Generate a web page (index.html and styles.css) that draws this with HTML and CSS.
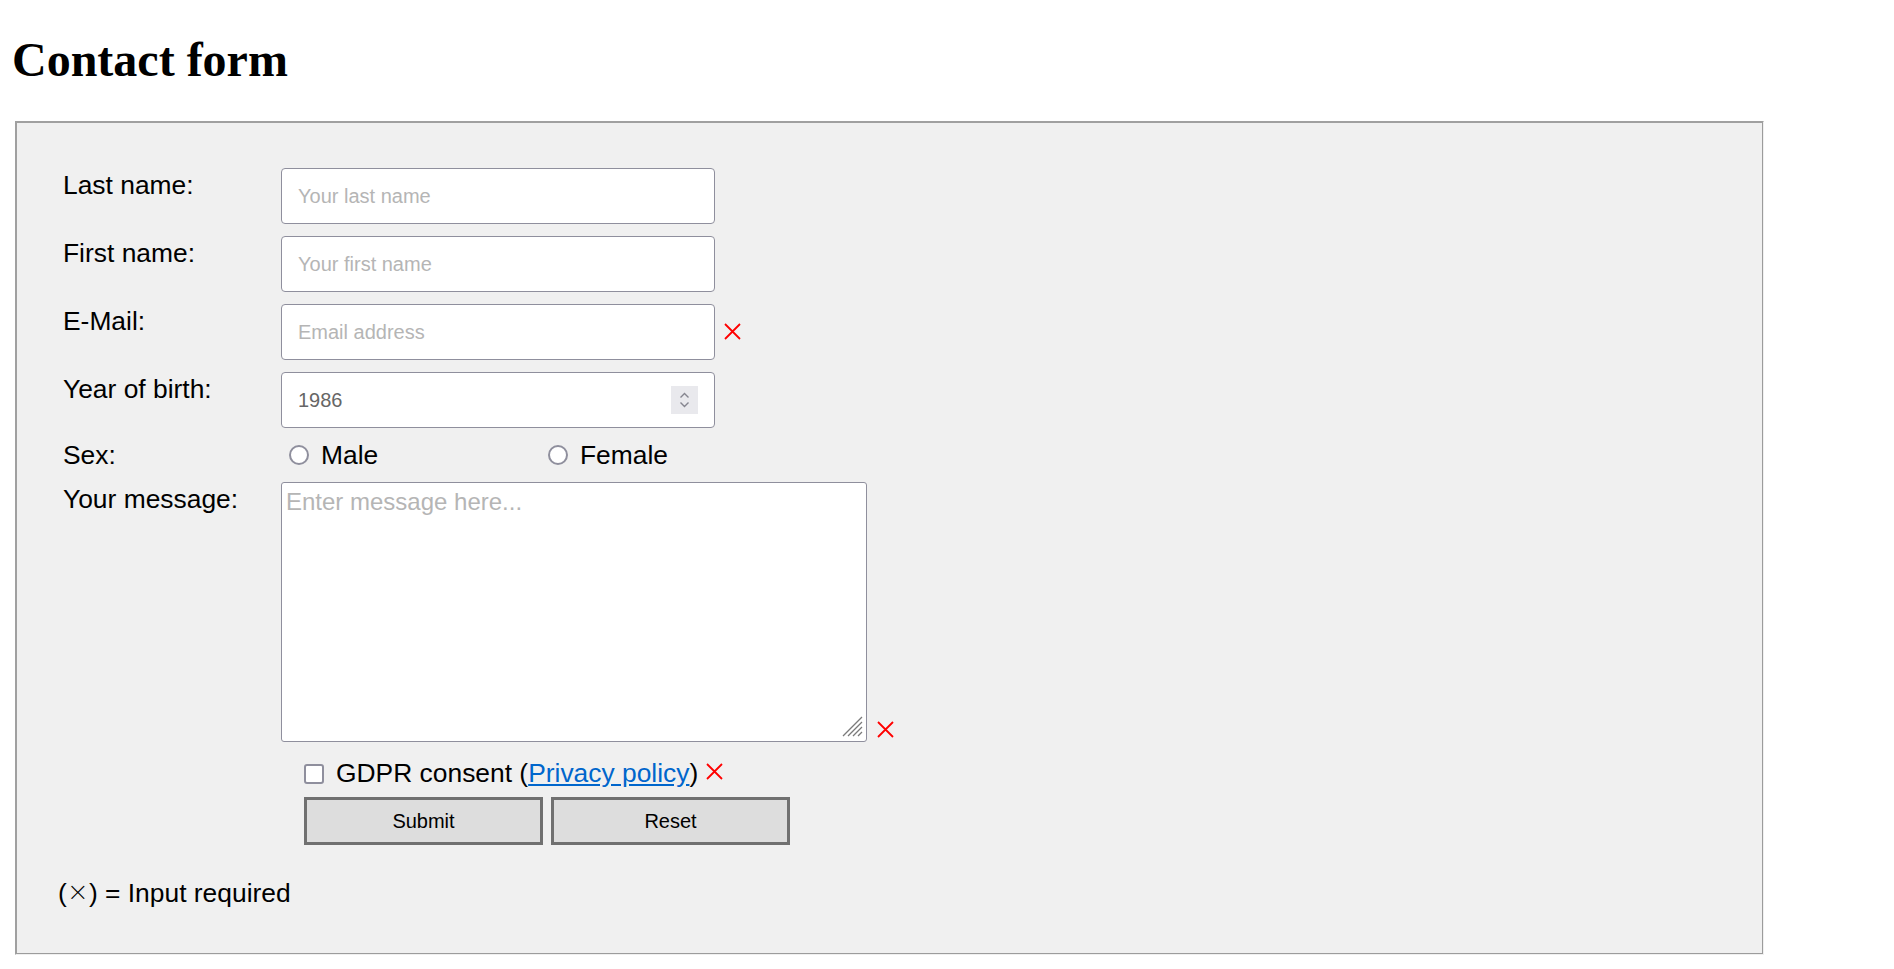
FILE: index.html
```html
<!DOCTYPE html>
<html lang="en">

<head>
  <meta charset="UTF-8">
  <meta name="viewport" content="width=device-width, initial-scale=1.0">
  <title>Contact form</title>
  <link rel="stylesheet" href="styles.css">
</head>

<body>
  <h1>Contact form</h1>

  <form class="contact-form">
    <div class="rows">
      <label class="caption" for="lastname">Last name:</label>
      <div class="field">
        <input type="text" id="lastname" placeholder="Your last name">
      </div>

      <label class="caption" for="firstname">First name:</label>
      <div class="field">
        <input type="text" id="firstname" placeholder="Your first name">
      </div>

      <label class="caption" for="email">E-Mail:</label>
      <div class="field middle">
        <input type="email" id="email" placeholder="Email address">
        <svg class="required" width="17" height="17" viewBox="0 0 17 17">
          <path d="M1 1 L16 16 M16 1 L1 16" />
        </svg>
      </div>

      <label class="caption" for="year">Year of birth:</label>
      <div class="field">
        <span class="number-box">
          <input type="number" id="year" value="1986">
          <span class="spin">
            <svg width="27" height="28" viewBox="0 0 27 28">
              <path d="M9.5 11.5 L13.5 7.5 L17.5 11.5" fill="none" stroke="#85858f" stroke-width="1.4" />
              <path d="M9.5 16.5 L13.5 20.5 L17.5 16.5" fill="none" stroke="#85858f" stroke-width="1.4" />
            </svg>
          </span>
        </span>
      </div>

      <span class="caption sex">Sex:</span>
      <div class="field options">
        <label class="option male"><input type="radio" name="sex" value="m">Male</label>
        <label class="option"><input type="radio" name="sex" value="f">Female</label>
      </div>

      <label class="caption" for="message">Your message:</label>
      <div class="field bottom">
        <span class="message-box">
          <textarea id="message" placeholder="Enter message here..."></textarea>
          <svg class="grip" width="21" height="21" viewBox="0 0 21 21">
            <path d="M1 20 L20 1 M6 20 L20 6 M11 20 L20 11 M16 20 L20 16" stroke="#7a7a7a" stroke-width="1.3" />
          </svg>
        </span>
        <svg class="required" width="17" height="17" viewBox="0 0 17 17">
          <path d="M1 1 L16 16 M16 1 L1 16" />
        </svg>
      </div>

      <div class="consent">
        <label class="gdpr">
          <input type="checkbox">
          <span>GDPR consent (<a href="#">Privacy policy</a>) <svg class="required" width="17" height="17" viewBox="0 0 17 17"><path d="M1 1 L16 16 M16 1 L1 16" /></svg></span>
        </label>
        <div class="buttons">
          <button type="submit">Submit</button>
          <button type="reset">Reset</button>
        </div>
      </div>
    </div>

    <p class="note">(<span class="cross">✕</span>) = Input required</p>
  </form>
</body>

</html>
```

FILE: styles.css
```css
body {
  margin: 0;
  padding: 0 12px;
  background: #fff;
  color: #000;
  font-family: "Liberation Sans", Arial, sans-serif;
}

h1 {
  font-family: "Liberation Serif", "Times New Roman", serif;
  font-size: 48px;
  font-weight: bold;
  margin: 32px 0 34px;
}

.contact-form {
  width: 1749px;
  box-sizing: border-box;
  margin-left: 3px;
  padding: 45px 0 44px 41px;
  background: #f0f0f0;
  border-top: 2px solid #a0a0a0;
  border-left: 2px solid #a0a0a0;
  border-right: 2px groove #f0f0f0;
  border-bottom: 2px groove #f0f0f0;
}

.rows {
  display: grid;
  grid-template-columns: 218px 1fr;
  row-gap: 12px;
  align-items: start;
  padding-left: 5px;
}

.caption {
  font-size: 26.4px;
  padding-top: 2px;
}

.caption.sex {
  padding-top: 0;
  line-height: 30px;
}

.field {
  display: flex;
  align-items: baseline;
  font-size: 26.4px;
}

.field.middle {
  align-items: center;
}

.field.bottom {
  align-items: flex-end;
}

.required {
  fill: none;
  stroke: #f00;
  stroke-width: 1.8;
}

.field.middle .required {
  margin: 0 0 2px 9px;
}

.field.bottom .required {
  margin: 0 0 4px 10px;
}

.gdpr .required {
  vertical-align: 2px;
}

.field input[type="text"],
.field input[type="email"],
.number-box {
  width: 434px;
  height: 56px;
  box-sizing: border-box;
  background: #fff;
  border: 1px solid #8f8f9d;
  border-radius: 4px;
}

.field input[type="text"],
.field input[type="email"],
.number-box input {
  margin: 0;
  padding: 0 16px;
  font-family: "Liberation Sans", Arial, sans-serif;
  font-size: 20px;
  color: #666;
}

::placeholder {
  color: #b5b5b5;
  opacity: 1;
}

.number-box {
  display: flex;
  align-items: center;
  padding-right: 16px;
}

.number-box input {
  flex: 1;
  min-width: 0;
  height: 100%;
  border: 0;
  background: transparent;
  outline: none;
  -moz-appearance: textfield;
}

.number-box input::-webkit-inner-spin-button,
.number-box input::-webkit-outer-spin-button {
  -webkit-appearance: none;
  margin: 0;
}

.spin {
  display: flex;
  width: 27px;
  height: 28px;
  background: #e9e9ed;
}

.options {
  padding-left: 8px;
  line-height: 30px;
}

.option {
  display: inline-flex;
  align-items: center;
  gap: 12px;
}

.option.male {
  width: 259px;
}

.option input,
.gdpr input {
  appearance: none;
  -webkit-appearance: none;
  flex: 0 0 20px;
  width: 20px;
  height: 20px;
  margin: 0;
  box-sizing: border-box;
  background: #fff;
  border: 2px solid #8f8f9d;
}

.option input {
  border-radius: 50%;
}

.gdpr input {
  border-radius: 3px;
}

.message-box {
  position: relative;
  display: block;
}

.message-box textarea {
  display: block;
  width: 586px;
  height: 260px;
  box-sizing: border-box;
  margin: 0;
  padding: 5px 4px;
  font-family: "Liberation Sans", Arial, sans-serif;
  font-size: 24px;
  border: 1px solid #8f8f9d;
  border-radius: 3px;
  resize: none;
}

.message-box .grip {
  position: absolute;
  right: 4px;
  bottom: 5px;
}

.consent {
  grid-column: 2;
  display: flex;
  flex-direction: column;
  gap: 8px;
  padding: 4px 0 0 23px;
}

.gdpr {
  display: flex;
  align-items: center;
  gap: 12px;
  font-size: 26.4px;
}

.gdpr a {
  color: #0066cc;
}

.buttons {
  display: flex;
  gap: 8px;
}

.buttons button {
  width: 239px;
  height: 48px;
  margin: 0;
  padding: 0;
  background: #ddd;
  border: 3px solid #707070;
  font-family: "Liberation Sans", Arial, sans-serif;
  font-size: 20px;
  color: #000;
}

.note {
  margin: 32px 0 0;
  font-size: 26.4px;
}

/* thin the dingbat cross, the installed fonts only draw it heavy */
.note .cross {
  font-family: "DejaVu Sans", sans-serif;
  -webkit-text-stroke: 1.2px #f0f0f0;
}
```
